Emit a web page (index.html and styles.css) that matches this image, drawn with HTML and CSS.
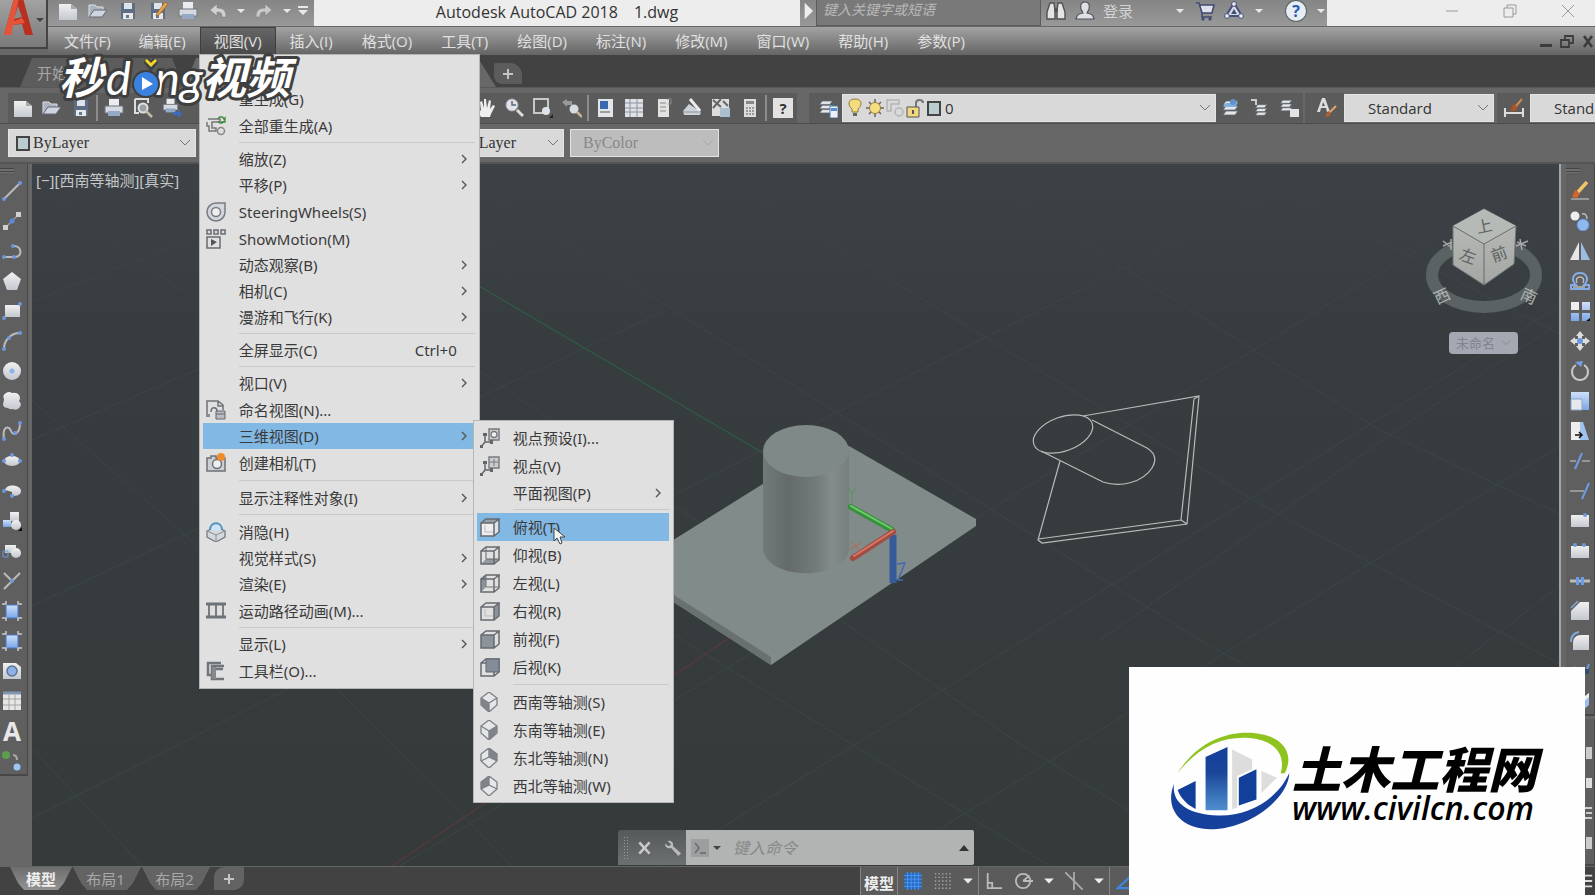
FILE: index.html
```html
<!DOCTYPE html>
<html lang="zh-CN">
<head>
    <meta charset="UTF-8">
    <meta name="viewport" content="width=device-width, initial-scale=1">
    <title>Autodesk AutoCAD 2018 1.dwg</title>
    <link rel="stylesheet" href="styles.css">
</head>
<body>
    <!-- shared icons -->
    <svg class="defs" aria-hidden="true">
        <defs>
            <linearGradient id="gl" x1="0" y1="0" x2="0" y2="1"><stop offset="0" stop-color="#f0f0f0"/><stop offset="1" stop-color="#c4c8d0"/></linearGradient>
            <linearGradient id="gb" x1="0" y1="0" x2="0" y2="1"><stop offset="0" stop-color="#cfe0fa"/><stop offset="1" stop-color="#7ba6e6"/></linearGradient>
        </defs>
        <symbol id="new" viewBox="0 0 20 20"><path d="M1 3h12l6 5v11H1z" fill="url(#gl)"/><path d="M13 3v5h6z" fill="#a8a8a8"/></symbol>
        <symbol id="open" viewBox="0 0 20 20"><path d="M1 16V4h6l2 2h6v3" fill="#a9b2bd" stroke="#dde2e8"/><path d="M1 16 6 9h13l-5 7z" fill="#cdd5de" stroke="#667"/></symbol>
        <symbol id="save" viewBox="0 0 20 20"><path d="M3 2h14v16H3z" fill="#5d6d84"/><path d="M6 2h8v6H6z" fill="#dce3ea"/><path d="M5 12h10v6H5z" fill="#e8e8e8"/><path d="M8 14h3v3H8z" fill="#68788c"/></symbol>
        <symbol id="print" viewBox="0 0 20 20"><path d="M5 1h10v7H5z" fill="#e9edf2"/><path d="M1 8h18v7H1z" fill="#d6dae0" stroke="#70757c"/><path d="M4 13h12v5H4z" fill="#93a9c6"/></symbol>
        <symbol id="down" viewBox="0 0 10 10"><path d="M1 3h8L5 7z" fill="currentColor"/></symbol>
        <symbol id="chev" viewBox="0 0 12 12"><path d="m1 3 5 5 5-5" fill="none" stroke="currentColor"/></symbol>
        <symbol id="right" viewBox="0 0 10 12"><path d="m3 2 4 4-4 4" fill="none" stroke="#555" stroke-width="1.4"/></symbol>
        <symbol id="layers" viewBox="0 0 20 20"><path d="M5 3h12l-3 4H2zM5 8h12l-3 4H2zM5 13h12l-3 4H2z" fill="#e5e8ea" stroke="#5d6570" stroke-width=".8"/></symbol>
        <symbol id="cube" viewBox="0 0 20 20"><path d="M1 6h13v13H1zM1 6l5-4h13l-5 4M19 2v13l-5 4" fill="none" stroke="#656a70" stroke-width="1.5"/></symbol>
        <symbol id="iso" viewBox="0 0 20 20"><path d="M9 1 1 10l8 9 8-9zM9 12v7M1 10l8 2 8-2" fill="none" stroke="#7b8086" stroke-width="1.4"/></symbol>
        <symbol id="region" viewBox="0 0 20 20"><path d="M4 4h12v13H4z" fill="url(#gb)" stroke="#4677cc"/><path d="M0 3h4V0M16 0v3h4M4 20v-3H0M20 17h-4v3" fill="none" stroke="#ccc" stroke-width="1.5"/></symbol>
    </svg>

    <header class="app-header">
        <button class="app-button" aria-label="应用程序菜单">
            <svg width="34" height="36" viewBox="0 0 30 36"><path d="M1 35 11-2h9l10 37h-8l-3-11-10 1-2 10z" fill="#b8301f"/><path d="m1 35 10-37h5L8 35zM9 22l10-4 3 5-13 2z" fill="#e5543a"/><path d="m15 6-4 13 8-2z" fill="#8b8b8b"/></svg>
            <svg class="dark" width="10" height="10"><use href="#down"/></svg>
        </button>
        <div class="title-row">
            <div class="quick">
                <button aria-label="新建"><svg><use href="#new"/></svg></button>
                <button aria-label="打开"><svg><use href="#open"/></svg></button>
                <button aria-label="保存"><svg><use href="#save"/></svg></button>
                <button aria-label="另存为"><svg viewBox="0 0 20 20"><use href="#save"/><path d="m9 12 8-11 3 2-8 10-4 2z" fill="#e8a24c" stroke="#8a5a20" stroke-width=".6"/></svg></button>
                <button aria-label="打印"><svg><use href="#print"/></svg></button>
                <button aria-label="放弃"><svg viewBox="0 0 20 20"><path d="m2 9 7-6v4c7 0 9 3 9 9h-4c0-4-1-5-5-5v4z" fill="#d2d2d2" stroke="#777" stroke-width=".5"/></svg></button>
                <button class="tiny" aria-label="放弃列表"><svg><use href="#down"/></svg></button>
                <button aria-label="重做"><svg viewBox="0 0 20 20"><path d="m18 9-7-6v4c-7 0-9 3-9 9h4c0-4 1-5 5-5v4z" fill="#c8c8c8" stroke="#777" stroke-width=".5"/></svg></button>
                <button class="tiny" aria-label="重做列表"><svg><use href="#down"/></svg></button>
                <button class="tiny" aria-label="自定义"><svg viewBox="0 0 10 14"><path d="M0 2h10v2H0zM0 6h10l-5 5z" fill="#e8e8e8"/></svg></button>
            </div>
            <h1 class="title"><span>Autodesk AutoCAD 2018</span><span>1.dwg</span></h1>
            <div class="search">
                <button aria-label="展开搜索"><svg width="8" height="12" viewBox="0 0 8 12"><path d="M2 1v10l5-5z" fill="#eee"/></svg></button>
                <input type="text" aria-label="搜索" placeholder="键入关键字或短语">
            </div>
            <div class="info">
                <button aria-label="查找"><svg viewBox="0 0 20 20"><path d="M4 2h4l1 8v8H1v-7zM12 2h4l3 9v7h-8v-8z" fill="#e4e4e4" stroke="#505050" stroke-width="1.4"/><path d="M8 7h4v4H8z" fill="#555"/></svg></button>
                <button class="login"><svg viewBox="0 0 20 20"><path d="M10 1c4 0 5 3 4 7l-2 4c5 1 6 2 7 6H1c1-4 2-5 7-6L6 8C5 4 6 1 10 1z" fill="#dfe0e4" stroke="#4e5362" stroke-width="1.2"/></svg>登录</button>
                <button class="tiny push" aria-label="登录选项"><svg><use href="#down"/></svg></button>
                <button aria-label="应用商店"><svg viewBox="0 0 20 20"><path d="M1 2h3l3 10h10l2-8H5" fill="#dfe2ea" stroke="#3f4a72" stroke-width="1.6"/><path d="M7 12v4h10" fill="none" stroke="#3f4a72" stroke-width="1.5"/><circle cx="8" cy="18" r="1.6" fill="#3f4a72"/><circle cx="15" cy="18" r="1.6" fill="#3f4a72"/></svg></button>
                <button aria-label="A360"><svg viewBox="0 0 20 20"><path d="m10 2 8 13H2z" fill="#d9dce6" stroke="#45507a" stroke-width="2"/><circle cx="10" cy="3" r="2.4" fill="#e6e8ef" stroke="#45507a"/><circle cx="3" cy="15" r="2.4" fill="#e6e8ef" stroke="#45507a"/><circle cx="17" cy="15" r="2.4" fill="#e6e8ef" stroke="#45507a"/><path d="m10 8 3 5H7z" fill="#45507a"/></svg></button>
                <button class="tiny" aria-label="A360 选项"><svg><use href="#down"/></svg></button>
                <button class="help" aria-label="帮助"><span>?</span></button>
                <button class="tiny" aria-label="帮助选项"><svg><use href="#down"/></svg></button>
            </div>
            <div class="win">
                <button aria-label="最小化"><svg viewBox="0 0 14 14"><path d="M1 7h12"/></svg></button>
                <button aria-label="还原"><svg viewBox="0 0 14 14"><path d="M1 4h9v9H1zM4 4V1h9v9h-3"/></svg></button>
                <button aria-label="关闭"><svg viewBox="0 0 14 14"><path d="m1 1 12 12M13 1 1 13"/></svg></button>
            </div>
        </div>
        <nav class="menubar">
            <button>文件(F)</button>
            <button>编辑(E)</button>
            <div class="menu-open">
                <button class="active" aria-expanded="true">视图(V)</button>
                <ul class="menu view-menu">
                    <li><button>重生成(G)</button></li>
                    <li><button class="tall"><svg class="mi" viewBox="0 0 20 20"><path d="M2 3h12v3H6v6h4v3H3v-5H1V6" fill="none" stroke="#777" stroke-width="1.5"/><path d="M12 3c1-3 5-3 6 0l1-1v4h-4M18 5c-1 3-5 3-6 0" fill="none" stroke="#3d8a3d" stroke-width="1.4"/><circle cx="15" cy="15" r="3.5" fill="none" stroke="#888" stroke-width="1.5"/></svg>全部重生成(A)</button></li>
                    <li class="sep"></li>
                    <li><button>缩放(Z)<svg class="arrow"><use href="#right"/></svg></button></li>
                    <li><button>平移(P)<svg class="arrow"><use href="#right"/></svg></button></li>
                    <li><button class="tall"><svg class="mi" viewBox="0 0 20 20"><path d="M10 1h9v9a9 9 0 1 1-9-9z" fill="#d3d6dc" stroke="#767b84" stroke-width="1.5"/><circle cx="10" cy="10" r="4.5" fill="#eee" stroke="#767b84" stroke-width="1.5"/></svg>SteeringWheels(S)</button></li>
                    <li><button class="tall"><svg class="mi" viewBox="0 0 20 20"><path d="M1 1h4v4H1zM8 1h4v4H8zM15 1h4v4h-4zM1 8h13v11H1z" fill="none" stroke="#676c72" stroke-width="1.5"/><path d="m5 10 6 3-6 4z" fill="#555"/></svg>ShowMotion(M)</button></li>
                    <li><button>动态观察(B)<svg class="arrow"><use href="#right"/></svg></button></li>
                    <li><button>相机(C)<svg class="arrow"><use href="#right"/></svg></button></li>
                    <li><button>漫游和飞行(K)<svg class="arrow"><use href="#right"/></svg></button></li>
                    <li class="sep"></li>
                    <li><button>全屏显示(C)<kbd>Ctrl+0</kbd></button></li>
                    <li class="sep"></li>
                    <li><button>视口(V)<svg class="arrow"><use href="#right"/></svg></button></li>
                    <li><button class="tall"><svg class="mi" viewBox="0 0 20 20"><path d="M1 17V1h11l5 4v5M12 1v5h5M3 17v-3M5 12c0-6 6-5 6-1" fill="none" stroke="#6d7278" stroke-width="1.5"/><path d="M10 11h9v8h-9z" fill="#b8bcc2" stroke="#62676e"/><path d="M10 14h9" stroke="#62676e"/></svg>命名视图(N)...</button></li>
                    <li class="parent">
                        <button class="hot" aria-expanded="true">三维视图(D)<svg class="arrow"><use href="#right"/></svg></button>
                        <ul class="menu sub-menu">
                            <li><button><svg class="mi" viewBox="0 0 20 20"><path d="M9 1h10v11H9z" fill="#ccc" stroke="#74797f" stroke-width="1.4"/><circle cx="14" cy="6.5" r="3" fill="#eee" stroke="#74797f" stroke-width="1.3"/><path d="M5 7v7h7M5 14l-4 5" fill="none" stroke="#62676e" stroke-width="1.5"/><path d="M0 17h3v3H0zM3 5h4v3H3zM10 12h3v4h-3z" fill="#666"/></svg>视点预设(I)...</button></li>
                            <li><button><svg class="mi" viewBox="0 0 20 20"><path d="M9 1h10v11H9z" fill="#ccc" stroke="#74797f" stroke-width="1.4"/><path d="M14 3v7M10 6h8" stroke="#74797f"/><path d="M5 7v7h7M5 14l-4 5" fill="none" stroke="#62676e" stroke-width="1.5"/><path d="M0 17h3v3H0zM3 5h4v3H3zM10 12h3v4h-3z" fill="#666"/></svg>视点(V)</button></li>
                            <li><button class="short">平面视图(P)<svg class="arrow"><use href="#right"/></svg></button></li>
                            <li class="sep"></li>
                            <li><button class="hot"><svg class="mi" viewBox="0 0 20 20"><path d="M1 6h13v13H1z" fill="#eee"/><path d="m1 6 5-4h13l-5 4z" fill="#9aa0a8"/><path d="M14 6l5-4v13l-5 4z" fill="#dde4ec"/><use href="#cube"/><path d="M5 8v7h8" fill="none" stroke="#bbb"/></svg>俯视(T)</button></li>
                            <li><button><svg class="mi" viewBox="0 0 20 20"><path d="m1 19 5-5h13l-5 5z" fill="#9399a1"/><use href="#cube"/><path d="M6 2v12h13" fill="none" stroke="#656a70"/></svg>仰视(B)</button></li>
                            <li><button><svg class="mi" viewBox="0 0 20 20"><path d="m1 6 5-4v12l-5 5z" fill="#8d939b"/><use href="#cube"/><path d="M6 2v12h13" fill="none" stroke="#777"/></svg>左视(L)</button></li>
                            <li><button><svg class="mi" viewBox="0 0 20 20"><path d="m14 6 5-4v13l-5 4z" fill="#8d939b"/><use href="#cube"/><path d="M5 8v7h8" fill="none" stroke="#bbb"/></svg>右视(R)</button></li>
                            <li><button><svg class="mi" viewBox="0 0 20 20"><path d="M1 6h13v13H1z" fill="#8d939b"/><use href="#cube"/></svg>前视(F)</button></li>
                            <li><button><svg class="mi" viewBox="0 0 20 20"><use href="#cube"/><path d="M6 2h13v13H6z" fill="#848c99" stroke="#5e6671"/></svg>后视(K)</button></li>
                            <li class="sep"></li>
                            <li><button><svg class="mi" viewBox="0 0 20 20"><path d="M9 0 1 6v7l8 7 8-7V6z" fill="#e4e6e8"/><path d="m1 6 8 5v9l-8-7z" fill="#7f848a"/><path d="M9 0 1 6v7l8 7 8-7V6zM1 6l8 5 8-5M9 11v9" fill="none" stroke="#7b8086" stroke-width="1.3"/></svg>西南等轴测(S)</button></li>
                            <li><button><svg class="mi" viewBox="0 0 20 20"><path d="M9 0 1 6v7l8 7 8-7V6z" fill="#e4e6e8"/><path d="m17 6-8 5v9l8-7z" fill="#7f848a"/><path d="M9 0 1 6v7l8 7 8-7V6zM1 6l8 5 8-5M9 11v9" fill="none" stroke="#7b8086" stroke-width="1.3"/></svg>东南等轴测(E)</button></li>
                            <li><button><svg class="mi" viewBox="0 0 20 20"><path d="M9 0 1 6v7l8 7 8-7V6z" fill="#e4e6e8"/><path d="m9 0 8 6v7L9 9z" fill="#7f848a"/><path d="M9 0 1 6v7l8 7 8-7V6zM9 0v9l-8 4M9 9l8 4" fill="none" stroke="#7b8086" stroke-width="1.3"/></svg>东北等轴测(N)</button></li>
                            <li><button><svg class="mi" viewBox="0 0 20 20"><path d="M9 0 1 6v7l8 7 8-7V6z" fill="#e4e6e8"/><path d="M9 0 1 6v7l8-4z" fill="#7f848a"/><path d="M9 0 1 6v7l8 7 8-7V6zM9 0v9l-8 4M9 9l8 4" fill="none" stroke="#7b8086" stroke-width="1.3"/></svg>西北等轴测(W)</button></li>
                        </ul>
                        <svg class="cursor" width="14" height="18" viewBox="0 0 14 18"><path d="M1 1v13l3-3 3 6 2-1-2-6h5z" fill="#f4f4f4" stroke="#444"/></svg>
                    </li>
                    <li><button class="tall"><svg class="mi" viewBox="0 0 20 20"><path d="M1 5h4V3h5v2h9v13H1z" fill="#ccd0d4" stroke="#6b7076" stroke-width="1.5"/><circle cx="11" cy="11" r="4.5" fill="#eee" stroke="#6b7076" stroke-width="1.5"/><circle cx="15" cy="4" r="4" fill="#ef8b2d"/></svg>创建相机(T)</button></li>
                    <li class="sep wide"></li>
                    <li><button>显示注释性对象(I)<svg class="arrow"><use href="#right"/></svg></button></li>
                    <li class="sep"></li>
                    <li><button class="tall"><svg class="mi" viewBox="0 0 20 20"><path d="m1 9 9-4 9 4v6l-9 5-9-5z" fill="#d5d8dc" stroke="#757b82" stroke-width="1.3"/><path d="M1 9l9 4 9-4M10 13v7" fill="none" stroke="#8a9097"/><path d="M4 8c0-9 12-9 12 0" fill="#cfe4f5" stroke="#4e8fbd" stroke-width="1.8"/></svg>消隐(H)</button></li>
                    <li><button>视觉样式(S)<svg class="arrow"><use href="#right"/></svg></button></li>
                    <li><button>渲染(E)<svg class="arrow"><use href="#right"/></svg></button></li>
                    <li><button class="tall"><svg class="mi" viewBox="0 0 20 20"><path d="M0 3h20M0 16h20" stroke="#6e7377" stroke-width="3"/><path d="M3 3v13M10 3v13M17 3v13" stroke="#6e7377" stroke-width="1.8"/></svg>运动路径动画(M)...</button></li>
                    <li class="sep"></li>
                    <li><button>显示(L)<svg class="arrow"><use href="#right"/></svg></button></li>
                    <li><button class="tall"><svg class="mi" viewBox="0 0 20 20"><path d="M15 2H2v12h3M18 5H6v13h12M9 8h8" fill="none" stroke="#70757a" stroke-width="2.5"/><path d="M6 6h4v12H6z" fill="#85898d"/></svg>工具栏(O)...</button></li>
                </ul>
            </div>
            <button>插入(I)</button>
            <button>格式(O)</button>
            <button>工具(T)</button>
            <button>绘图(D)</button>
            <button>标注(N)</button>
            <button>修改(M)</button>
            <button>窗口(W)</button>
            <button>帮助(H)</button>
            <button>参数(P)</button>
            <div class="doc-win">
                <button aria-label="最小化图形"><svg viewBox="0 0 14 14"><path d="M1 10h12v3H1z" fill="#3c3c3c"/></svg></button>
                <button aria-label="还原图形"><svg viewBox="0 0 14 14"><path d="M1 6h8v7H1zM5 5V2h8v7h-3" fill="none" stroke="#3c3c3c" stroke-width="1.8"/></svg></button>
                <button aria-label="关闭图形"><svg viewBox="0 0 14 14"><path d="m3 2 8 11M11 2 3 13" stroke="#3c3c3c" stroke-width="2.6"/></svg></button>
            </div>
        </nav>
    </header>

    <div class="doc-tabs">
        <button class="tab-start">开始</button>
        <button class="tab-doc" aria-label="1.dwg"></button>
        <button class="tab-plus" aria-label="新图形"><svg width="12" height="12" viewBox="0 0 12 12"><path d="M6 1v10M1 6h10" stroke="#c4c4c4" stroke-width="2"/></svg></button>
    </div>

    <div class="toolbar">
        <div class="group files">
            <svg><use href="#new"/></svg>
            <svg><use href="#open"/></svg>
            <svg><use href="#save"/></svg>
            <i></i>
            <svg><use href="#print"/></svg>
            <svg viewBox="0 0 20 20"><path d="M2 1h13v4M2 1v14h4" fill="none" stroke="#ddd" stroke-width="2"/><circle cx="10" cy="10" r="4.5" fill="#9aa0a6" stroke="#e2e2e2" stroke-width="2"/><path d="m13 13 6 6" stroke="#c4b8a8" stroke-width="2.5"/></svg>
            <svg viewBox="0 0 20 20"><use href="#print" width="17" height="16"/><path d="M11 14h5v-3l4 5-4 4v-3h-5z" fill="#3a6cc0"/></svg>
        </div>
        <div class="group zooms">
            <svg viewBox="0 0 20 20"><path d="M6 19 1 11l2-1 3 3-1-9 2-1 2 7V1h2l1 9 2-8 2 1-1 8 3-4 2 1-4 8-1 3z" fill="#eee"/></svg>
            <svg viewBox="0 0 20 20"><circle cx="8" cy="7" r="6" fill="#e0e4ea" stroke="#aaa"/><path d="M8 3v4h4" stroke="#567" fill="none" stroke-width="1.5"/><path d="m13 12 6 6" stroke="#ddd" stroke-width="3"/></svg>
            <svg viewBox="0 0 20 20"><path d="M1 1h14v14H1z" fill="none" stroke="#c8c8c8" stroke-width="2"/><circle cx="13" cy="13" r="4" fill="#dde3ea"/><path d="M20 16v4h-4z" fill="#222"/></svg>
            <svg viewBox="0 0 20 20"><path d="m0 4 5-3v2h5v4H5v2z" fill="#999"/><circle cx="12" cy="11" r="4.5" fill="#d5dce4"/><path d="m15 14 5 5" stroke="#c4b29a" stroke-width="2.5"/></svg>
            <i></i>
            <svg viewBox="0 0 20 20"><path d="M3 1h15v18H3z" fill="#e2e5e9"/><path d="M5 3h8v8H5z" fill="#3b69ad"/><path d="M5 14h10" stroke="#555"/></svg>
            <svg viewBox="0 0 20 20"><path d="M1 1h18v18H1z" fill="#dfe1e4"/><path d="M1 5h18M1 10h18M1 14h18M6 1v18M13 1v18" stroke="#8b93a3"/></svg>
            <svg viewBox="0 0 20 20"><path d="M5 1h11v18H5z" fill="#e2e2e0"/><path d="M14 1h4v5h-3M7 5h6M7 9h6M7 13h6" stroke="#8a8a8a" fill="none"/></svg>
            <svg viewBox="0 0 20 20"><path d="m1 13 6-7 12 8-1 3H2z" fill="#ccd3d8"/><path d="m8 1 10 12" stroke="#eee" stroke-width="3"/><path d="M1 14h18" stroke="#8593a0"/></svg>
            <svg viewBox="0 0 20 20"><path d="M1 1h17v17H1z" fill="#ddd"/><path d="m2 2 8 7M10 1l-8 9M12 3l5 5" stroke="#666" stroke-width="2"/><path d="M9 10h10v9H9z" fill="#a9bfd0"/></svg>
            <svg viewBox="0 0 20 20"><path d="M4 1h12v18H4z" fill="#ddd"/><path d="M6 3h8v3H6z" fill="#888"/><path d="M6 10h8M6 13h8M6 16h8" stroke="#999" stroke-dasharray="2 1" stroke-width="2"/></svg>
            <i></i>
            <span class="question">?</span>
        </div>
        <div class="group layer-icon">
            <svg viewBox="0 0 20 20"><use href="#layers" width="17" height="18"/><path d="M12 8h8v12h-8z" fill="#edf1f5" stroke="#4f7db8"/><path d="M13 10h6v3h-6z" fill="#5a8fd0"/></svg>
        </div>
        <div class="combo layer">
            <svg viewBox="0 0 20 20"><path d="M10 1c8 0 7 7 3 10v3H7v-3C3 8 2 1 10 1z" fill="#f3dc80" stroke="#927a30"/><path d="M8 15h4v3H8z" fill="#666"/></svg>
            <svg viewBox="0 0 20 20"><path d="M10 1v18M1 10h18M4 4l12 12M16 4 4 16" stroke="#666" stroke-width="1.5"/><circle cx="10" cy="10" r="5.5" fill="#f6de84" stroke="#a08030"/></svg>
            <svg viewBox="0 0 20 20"><path d="M2 2h12v4H6v7H2z" fill="none" stroke="#b4b4b4" stroke-width="1.5"/><circle cx="14" cy="14" r="4" fill="none" stroke="#b4b4b4" stroke-width="1.5"/></svg>
            <svg viewBox="0 0 20 20"><path d="M11 9V5c0-4 7-4 7 0" fill="none" stroke="#777" stroke-width="2"/><path d="M2 9h12v10H2z" fill="#f1d982" stroke="#555"/><path d="M8 12v4" stroke="#555" stroke-width="2"/></svg>
            <i class="swatch"></i>
            <select aria-label="图层"><option>0</option></select>
            <svg class="chev"><use href="#chev"/></svg>
        </div>
        <div class="group">
            <svg viewBox="0 0 20 20"><use href="#layers"/><path d="M5 5h12l-3 4H2z" fill="#7fb0e2"/><circle cx="12" cy="4" r="3" fill="#5d91cc"/></svg>
            <svg viewBox="0 0 20 20"><use href="#layers" x="4" y="4" width="15" height="16"/><path d="M1 2h5v5" fill="none" stroke="#ccc" stroke-width="2"/></svg>
            <svg viewBox="0 0 20 20"><use href="#layers" width="15" height="15"/><path d="M11 11h9v8h-9z" fill="#e2e4e8"/></svg>
        </div>
        <div class="group style">
            <svg viewBox="0 0 20 20"><path d="m0 14 5-14h3l5 14h-3l-1-4H4l-1 4zM5 8h3L6 4z" fill="#ddd"/><path d="m8 19 3-6 3 1-1 4z" fill="#b1602c"/><path d="m13 14 6-6" stroke="#dfa860" stroke-width="2"/></svg>
        </div>
        <label class="combo std"><select aria-label="文字样式"><option>Standard</option></select><svg class="chev"><use href="#chev"/></svg></label>
        <div class="group dim">
            <svg viewBox="0 0 20 20"><path d="M1 10v9M19 10v9M1 15h18" stroke="#ddd" stroke-width="2"/><path d="m6 13 3-7 5 2-2 5z" fill="#a7552c"/><path d="m12 8 6-7" stroke="#c98a50" stroke-width="2"/></svg>
        </div>
        <label class="combo std last"><select aria-label="标注样式"><option>Standard</option></select></label>
    </div>

    <div class="props">
        <label class="combo color"><i class="swatch"></i><select aria-label="颜色"><option>ByLayer</option></select><svg class="chev"><use href="#chev"/></svg></label>
        <label class="combo weight"><select aria-label="线宽"><option>ByLayer</option></select><svg class="chev"><use href="#chev"/></svg></label>
        <label class="combo plot"><select aria-label="打印样式" disabled><option>ByColor</option></select><svg class="chev"><use href="#chev"/></svg></label>
    </div>

    <main class="work">
        <aside class="side left">
            <div class="dock">
                <svg viewBox="0 0 20 20"><path d="M2 18 18 2" stroke="#bbb" stroke-width="2"/><circle cx="2" cy="18" r="2" fill="#6d99dc"/><circle cx="18" cy="2" r="2" fill="#6d99dc"/></svg>
                <svg viewBox="0 0 20 20"><path d="M3 17 17 3" stroke="#999" stroke-width="1.5"/><path d="M1 14h5v5H1zM14 1h5v5h-5z" fill="#d0d0d0"/><circle cx="10" cy="10" r="2.5" fill="#5a8ae0"/></svg>
                <svg viewBox="0 0 20 20"><path d="M1 16h12c8 0 7-12-2-11" fill="none" stroke="#bbb" stroke-width="2"/><circle cx="2" cy="16" r="2" fill="#6d99dc"/><circle cx="12" cy="16" r="2" fill="#6d99dc"/><circle cx="11" cy="5" r="2" fill="#6d99dc"/></svg>
                <svg viewBox="0 0 20 20"><path d="m10 1 9 7-4 11H5L1 8z" fill="url(#gl)"/></svg>
                <svg viewBox="0 0 20 20"><path d="M3 4h15v12H3z" fill="url(#gl)"/><circle cx="2" cy="17" r="2" fill="#6d99dc"/><circle cx="18" cy="3" r="2" fill="#6d99dc"/></svg>
                <svg viewBox="0 0 20 20"><path d="M2 18C2 10 8 2 18 2" fill="none" stroke="#bbb" stroke-width="2"/><circle cx="2" cy="18" r="2" fill="#6d99dc"/><circle cx="7" cy="7" r="2" fill="#6d99dc"/><circle cx="18" cy="2" r="2" fill="#6d99dc"/></svg>
                <svg viewBox="0 0 20 20"><circle cx="10" cy="10" r="9" fill="url(#gl)"/><circle cx="10" cy="10" r="2.5" fill="#8cb4ec"/></svg>
                <svg viewBox="0 0 20 20"><path d="M4 2q3-2 6 0 5-1 7 2 2 3 0 6 3 3 1 6-3 4-7 2-3 1-5-1-5 0-5-4 1-3 1-5-2-4 2-6z" fill="url(#gl)"/></svg>
                <svg viewBox="0 0 20 20"><path d="M2 18C0 5 7 4 9 10s9 3 9-8" fill="none" stroke="#bbb" stroke-width="2"/><circle cx="2" cy="18" r="2" fill="#6d99dc"/><circle cx="13" cy="12" r="2" fill="#6d99dc"/><circle cx="18" cy="2" r="2" fill="#6d99dc"/></svg>
                <svg viewBox="0 0 20 20"><ellipse cx="10" cy="10" rx="8" ry="5" fill="url(#gl)"/><circle cx="2" cy="10" r="2" fill="#6d99dc"/><circle cx="18" cy="10" r="2" fill="#6d99dc"/><circle cx="10" cy="4" r="2" fill="#6d99dc"/></svg>
                <svg viewBox="0 0 20 20"><path d="M3 9c2-7 16-5 16 1 0 4-4 5-9 5v-4z" fill="url(#gl)"/><circle cx="2" cy="10" r="2" fill="#6d99dc"/><circle cx="10" cy="15" r="2" fill="#6d99dc"/></svg>
                <svg viewBox="0 0 20 20"><path d="M8 1h9v9H8z" fill="url(#gl)"/><path d="M1 9h8v7H1z" fill="url(#gb)"/><circle cx="14" cy="14" r="5" fill="url(#gl)"/><path d="M20 16v4h-4z" fill="#111"/></svg>
                <svg viewBox="0 0 20 20"><path d="M3 4h11v8H3z" fill="url(#gl)"/><circle cx="14" cy="12" r="5" fill="url(#gl)"/><path d="M1 10h5v6H1z" fill="none" stroke="#6d99dc"/></svg>
                <svg viewBox="0 0 20 20"><path d="M2 18 18 2M2 2l8 8" stroke="#bbb" stroke-width="2"/><circle cx="10" cy="10" r="2" fill="#6d99dc"/></svg>
                <svg><use href="#region"/></svg>
                <svg><use href="#region"/></svg>
                <svg viewBox="0 0 20 20"><path d="M1 2h13l5 4v12H1z" fill="url(#gl)"/><circle cx="10" cy="10" r="5" fill="#8eb2e8" stroke="#5e7490" stroke-width="1.5"/></svg>
                <svg viewBox="0 0 20 20"><path d="M1 1h18v18H1z" fill="#e6e6e4"/><path d="M1 2h18" stroke="#8296b4" stroke-width="3"/><path d="M1 8h18M1 14h18M7 4v15M13 4v15" stroke="#a4a4a4"/></svg>
                <b>A</b>
                <svg viewBox="0 0 20 20"><circle cx="4" cy="4" r="4" fill="#5b9e4b"/><path d="M11 4q4 0 4 5" fill="none" stroke="#aaa" stroke-width="2"/><circle cx="15" cy="16" r="3.5" fill="#9cc6f4"/></svg>
            </div>
        </aside>

        <section class="viewport">
            <!-- scene coordinates follow the window -->
            <svg class="scene" viewBox="32 164 1527 702" preserveAspectRatio="xMinYMin slice">
                <defs>
                    <linearGradient id="cyl"><stop offset="0" stop-color="#727a79"/><stop offset=".3" stop-color="#646b6a"/><stop offset=".65" stop-color="#757c7c"/><stop offset=".8" stop-color="#858c8c"/><stop offset="1" stop-color="#767e7e"/></linearGradient>
                    <linearGradient id="cubeL" x1="0" x2="0" y1="0" y2="1"><stop offset="0" stop-color="#babdba"/><stop offset="1" stop-color="#a3a6a3"/></linearGradient>
                </defs>
                <path class="grid" d="M32 302 340 180M32 440l460-196M32 606l630-294M32 818 1330 164M400 866l860-520 299-182M660 866l900-560M880 866l680-420M1100 640l300-212 159-105M1400 710l160-125M40 190l170 120 440 310 400 246M32 400l150 132 330 334M30 746l112 120M180 164l840 580 200 122M440 164l760 476 300 170M700 164l560 340 300 160M960 164l420 266 180 84M1230 164l330 170"/>
                <path d="M479 286 763 453" stroke="#2b6646"/>
                <path d="M735 634 392 866" stroke="#6a353a"/>
                <path d="m630 567 176-110 43-11 127 73v7L771 665 630 574z" fill="#808b8a"/>
                <path d="m630 567 141 90v8l-141-91z" fill="#687070"/>
                <path d="M763 451v96c0 35 86 35 86 0v-96z" fill="url(#cyl)"/>
                <ellipse cx="806" cy="451" rx="43" ry="26" fill="#7f8988"/>
                <g stroke-linecap="round">
                    <path d="m851 507 41 23" stroke="#38903d" stroke-width="6"/><path d="m851 506 41 23" stroke="#69cc69" stroke-width="2"/>
                    <path d="M893 535v48" stroke="#355b9b" stroke-width="7" stroke-linecap="butt"/>
                    <path d="m893 532-40 26" stroke="#a34c43" stroke-width="6"/><path d="m893 531-39 25" stroke="#d77768" stroke-width="2"/>
                </g>
                <path d="m848 487 4 7 4-7m-4 7v9" fill="none" stroke="#4c9c51"/>
                <path d="m851 541 9 10m1-8-11 6" fill="none" stroke="#b56758"/>
                <path d="m897 564 8-1-7 17h5" fill="none" stroke="#4269b8" stroke-width="1.5"/>
                <g fill="none" stroke="#b8bbbb" stroke-width="1.2">
                    <ellipse cx="1063" cy="434" rx="31" ry="17" transform="rotate(-20 1063 434)"/>
                    <path d="m1092 420 55 28c8 5 10 12 5 20-9 14-31 20-49 14l-62-31M1083 416l116-20-12 128-145 19-4-3 22-79M1199 396l-5 3-13 121-143 19M1181 520l6 4"/>
                </g>
                <g class="compass">
                    <ellipse cx="1484" cy="275" rx="52" ry="32" fill="none" stroke="#5b6264" stroke-width="12"/>
                    <path d="m1484 209 32 17-2 38-30 21-31-20v-39z" fill="url(#cubeL)" stroke="#6f7474"/>
                    <path d="m1484 209 32 17-32 18-31-18z" fill="#b6bab7"/>
                    <path d="m1453 226 31 18 32-18M1484 244v41" fill="none" stroke="#666b6b"/>
                    <text x="1476" y="232" transform="rotate(-12 1484 226)">上</text>
                    <text x="1460" y="262" transform="rotate(20 1468 256)">左</text>
                    <text x="1491" y="260" transform="rotate(-20 1499 254)">前</text>
                    <g class="dirs"><text x="1434" y="302" transform="rotate(-25 1442 296)">西</text><text x="1521" y="302" transform="rotate(25 1529 296)">南</text></g>
                    <path d="m1443 241 9 7m-1-9v11m-8-4 9-4M1517 242l9 4m-6-7 2 11m-6-4 12-5" stroke="#a3a7a7" stroke-width="1.5"/>
                </g>
            </svg>
            <p class="view-label">[−][西南等轴测][真实]</p>
            <button class="ucs">未命名 <svg><use href="#chev"/></svg></button>
            <div class="command">
                <div class="command-tools">
                    <i class="dots"></i>
                    <button aria-label="关闭命令行"><svg viewBox="0 0 14 14"><path d="m2 2 9 10M11 2 2 12" stroke="#c8caca" stroke-width="2.2"/></svg></button>
                    <button aria-label="自定义"><svg viewBox="0 0 18 18"><path d="M3 1 7 5 4 7 0 4c0 5 4 6 7 5l8 9 3-3-9-8c1-4-2-7-6-6z" fill="#b9bcbc"/></svg></button>
                </div>
                <div class="command-line">
                    <svg width="18" height="18" viewBox="0 0 18 18"><path d="M0 0h18v18H0z" fill="#9b9f9f"/><path d="m4 4 4 5-4 5M9 14h6" fill="none" stroke="#666b6b" stroke-width="1.5"/></svg>
                    <svg class="dark" width="10" height="10"><use href="#down"/></svg>
                    <input type="text" aria-label="命令" placeholder="键入命令">
                    <svg width="10" height="10" viewBox="0 0 10 10"><path d="M0 8h10L5 2z" fill="#333"/></svg>
                </div>
            </div>
        </section>

        <aside class="side right">
            <div class="dock">
                <svg viewBox="0 0 20 20"><path d="M1 18h18" stroke="#aaa" stroke-width="1.5"/><path d="m2 16 3-7 5 4-3 4z" fill="#d3642b"/><path d="m8 11 9-10" stroke="#f1c46c" stroke-width="3.5"/></svg>
                <svg viewBox="0 0 20 20"><circle cx="5" cy="5" r="4.5" fill="#eee"/><circle cx="13" cy="14" r="6" fill="#8fb8ee" stroke="#5e8cd0"/><path d="M12 3q5-1 5 5" fill="none" stroke="#bbb" stroke-width="1.5"/></svg>
                <svg viewBox="0 0 20 20"><path d="M9 1v18H0z" fill="#e6e6e6"/><path d="M11 1v18h9z" fill="#9dbce4"/></svg>
                <svg viewBox="0 0 20 20"><path d="M1 18h18v-4h-5c6-6 2-12-4-12S0 8 6 14H1z" fill="none" stroke="#84ade8" stroke-width="2"/><path d="M3 16h12M7 12c-4-8 10-8 6 0" fill="none" stroke="#bbb" stroke-width="1.5"/></svg>
                <svg viewBox="0 0 20 20"><path d="M1 1h8v8H1z" fill="#eee"/><path d="M12 1h8v8h-8zM1 12h8v8H1zM12 12h8v8h-8z" fill="url(#gb)"/><path d="M20 17v3h-4z" fill="#111"/></svg>
                <svg viewBox="0 0 20 20"><path d="m10 0 4 5H6zM10 20l-4-5h8zM0 10l5-4v8zM20 10l-5 4V6zM8 5h4v10H8z" fill="#ddd"/><path d="M5 8h10v4H5z" fill="#ddd"/><circle cx="10" cy="10" r="3" fill="#6b9ae2"/></svg>
                <svg viewBox="0 0 20 20"><path d="M6 4a8 8 0 1 0 8 0" fill="none" stroke="#c8c8c8" stroke-width="2"/><path d="m5 1 8-1-2 6z" fill="#72a2e8"/></svg>
                <svg viewBox="0 0 20 20"><path d="M1 1h18v18H1z" fill="url(#gb)"/><path d="M1 8h11v11H1z" fill="#e6e8ec" stroke="#8aa4ca"/></svg>
                <svg viewBox="0 0 20 20"><path d="M1 1h11v18H1z" fill="#eee"/><path d="M10 1h3l6 18h-9z" fill="#9fc2ef"/><path d="M5 14h7m-3-3 3 3-3 3" fill="none" stroke="#111" stroke-width="1.5"/></svg>
                <svg viewBox="0 0 20 20"><path d="M0 10h6M12 10h8" stroke="#aaa" stroke-width="1.5"/><path d="m5 18 7-16" stroke="#6e9ce4" stroke-width="2"/></svg>
                <svg viewBox="0 0 20 20"><path d="M0 10h14" stroke="#aaa" stroke-width="1.5"/><path d="m12 18 7-16" stroke="#6e9ce4" stroke-width="2"/></svg>
                <svg viewBox="0 0 20 20"><path d="M1 4h18v12H1z" fill="url(#gl)"/><circle cx="15" cy="4" r="2" fill="#6d99dc"/></svg>
                <svg viewBox="0 0 20 20"><path d="M1 5h18v12H1z" fill="url(#gl)"/><circle cx="5" cy="4" r="2" fill="#6d99dc"/><circle cx="14" cy="4" r="2" fill="#6d99dc"/></svg>
                <svg viewBox="0 0 20 20"><path d="M0 10h20" stroke="#bbb" stroke-width="3"/><path d="M6 6h3v8H6zM11 6h3v8h-3z" fill="#6b9ee8"/></svg>
                <svg viewBox="0 0 20 20"><path d="M1 10 10 1h9v18H1z" fill="url(#gl)"/><path d="m1 7 7-7" stroke="#81a8df" stroke-width="1.5"/></svg>
                <svg viewBox="0 0 20 20"><path d="M3 19v-7c0-5 3-8 8-8h8v15z" fill="url(#gl)"/><path d="M1 11C1 5 4 2 9 1" fill="none" stroke="#81a8df" stroke-width="2"/></svg>
                <svg viewBox="0 0 20 20"><path d="M1 12c3-8 7-6 9-1s5 3 9-8" fill="none" stroke="#6b9ee8" stroke-width="2"/><path d="M14 8h5v5h-5z" fill="#394a6a"/></svg>
                <svg viewBox="0 0 20 20"><path d="m9 10 10-8v12l-6 5z" fill="#9bc0f0"/><path d="m9 10 10-8v4l-8 7z" fill="#eee"/></svg>
            </div>
            <div class="dock order">
                <svg viewBox="0 0 20 20"><path d="M12 4h6v12h-6z" fill="#ccc"/></svg>
                <svg viewBox="0 0 20 20"><path d="M12 5h6v10h-6z" fill="#ddd"/></svg>
                <svg viewBox="0 0 20 20"><path d="M10 5h8M12 10h6M10 15h8" stroke="#ccc" stroke-width="2"/></svg>
                <svg viewBox="0 0 20 20"><path d="M12 4h6v12h-6z" fill="#ccc"/></svg>
            </div>
        </aside>
    </main>

    <footer class="status">
        <div class="layouts">
            <button class="current">模型</button>
            <button>布局1</button>
            <button>布局2</button>
            <button class="add" aria-label="新建布局"><svg width="12" height="12" viewBox="0 0 12 12"><path d="M6 1v10M1 6h10" stroke="#c4c4c4" stroke-width="2"/></svg></button>
        </div>
        <div class="modes">
            <button class="model">模型</button>
            <button aria-label="栅格" class="on"><svg viewBox="0 0 20 20"><path d="M1 1h18v18H1z" fill="#2869c4"/><path d="M4 0v20M8 0v20M12 0v20M16 0v20M0 4h20M0 8h20M0 12h20M0 16h20" stroke="#4c98f4"/></svg></button>
            <button aria-label="捕捉"><svg viewBox="0 0 20 20"><path d="M1 2h18M1 6h18M1 10h18M1 14h18M1 18h18" stroke="#aaa" stroke-width="1.5" stroke-dasharray="1.5 2.5"/></svg></button>
            <button class="tiny" aria-label="捕捉选项"><svg><use href="#down"/></svg></button>
            <i></i>
            <button aria-label="正交"><svg viewBox="0 0 20 20"><path d="M3 1v17h16M3 12h5v6" fill="none" stroke="#bbb" stroke-width="2"/></svg></button>
            <button aria-label="极轴追踪"><svg viewBox="0 0 20 20"><circle cx="9" cy="10" r="8" fill="none" stroke="#bbb" stroke-width="2"/><path d="M9 10h11M9 10l7-6" fill="none" stroke="#bbb" stroke-width="2"/></svg></button>
            <button class="tiny" aria-label="极轴选项"><svg><use href="#down"/></svg></button>
            <button aria-label="等轴测草图"><svg viewBox="0 0 20 20"><path d="m0 0 20 20M10 0v20" fill="none" stroke="#aaa" stroke-width="2"/></svg></button>
            <button class="tiny" aria-label="等轴测选项"><svg><use href="#down"/></svg></button>
            <i></i>
            <button aria-label="对象捕捉追踪"><svg viewBox="0 0 20 20"><path d="M18 3 2 18h18" fill="none" stroke="#3c86e0" stroke-width="2.5"/></svg></button>
        </div>
        <button class="customize" aria-label="自定义状态栏"><svg viewBox="0 0 20 20"><path d="M2 4h16M2 10h16M2 16h16" stroke="#ddd" stroke-width="2"/></svg></button>
    </footer>

    <!-- video watermark -->
    <svg class="watermark" width="244" height="58" viewBox="0 0 244 58">
        <g class="wm">
            <text x="2" y="38" font-size="44">秒</text>
            <text x="49" y="39" font-size="47" class="lat">d</text>
            <text x="98" y="39" font-size="47" class="lat">ng</text>
            <text x="145" y="38" font-size="44">视频</text>
        </g>
        <circle cx="89" cy="28" r="14" fill="#3f3f3f"/>
        <circle cx="89" cy="28" r="12" fill="#3b82e0"/>
        <path d="M85 21v13l11-6z" fill="#fff"/>
        <path d="m89 4 5 6 5-6" fill="none" stroke="#3f3f3f" stroke-width="7"/>
        <path d="m89 4 5 5 5-5" fill="none" stroke="#f2d62e" stroke-width="3"/>
    </svg>

    <!-- site badge -->
    <a class="badge" href="#">
        <svg width="123" height="100" viewBox="150 930 370 300">
            <defs><linearGradient id="tower" x1="0" x2="0" y1="0" y2="1"><stop offset="0" stop-color="#123f9a"/><stop offset=".4" stop-color="#1a4699"/><stop offset="1" stop-color="#4f8fce"/></linearGradient></defs>
            <path d="M175 1057c60-95 150-130 235-121 80 8 120 60 88 121h-12c17-60-22-100-92-106-80-7-155 25-219 106z" fill="#8fc320"/>
            <path d="m340 985 60 30v30l-45 20v95l-15 5zM428 1050l47 20-47 46z" fill="#ddd"/>
            <path d="m176 1107 54-27v84c-25-12-45-32-54-57z" fill="#123f9a"/>
            <path d="m260 1008 66-30v190h-66z" fill="url(#tower)"/>
            <path d="m360 1070 53-25v91l-53 18z" fill="#123f9a"/>
            <path d="M165 1088c-30 75 20 137 110 137 120 0 235-95 237-169-38 82-125 131-215 128-90-3-140-38-132-96z" fill="#15409c"/>
        </svg>
        <span class="badge-text"><strong>土木工程网</strong><em>www.civilcn.com</em></span>
    </a>
</body>
</html>
```
FILE: styles.css
```css
* {
    box-sizing: border-box;
    margin: 0;
    padding: 0;
}
:root {
    --ui: "Open Sans", "Noto Sans CJK SC", sans-serif;
    --bar: #676767;
    --dock: #5b5b5b;
    --dark: #424242;
    --field: #d9d9d9;
    --menu: #e0e0e0;
    --hot: #82b8e4;
}
body {
    display: flex;
    flex-direction: column;
    height: 100vh;
    overflow: hidden;
    background: var(--bar);
    font: 15px/20px var(--ui);
    color: #333;
}
button, input, select {
    font: inherit;
    color: inherit;
    border: 0;
    background: none;
    appearance: none;
    outline: 0;
}
button {
    display: flex;
    align-items: center;
    justify-content: center;
}
svg {
    flex: none;
}
.defs {
    position: absolute;
    width: 0;
    height: 0;
}
.dark {
    color: #444;
}

/* title row and menu bar */
.app-header {
    display: grid;
    grid-template-columns: 48px 1fr;
    grid-template-rows: 27px 28px;
}
.app-button {
    grid-row: span 2;
    height: 49px;
    background: linear-gradient(#a2a2a2, #7a7a7a);
    border-right: 2px solid #444;
    border-bottom: 2px solid #444;
    align-items: flex-start;
}
.app-button .dark {
    margin-top: 15px;
}
.title-row {
    display: flex;
    background: #ededed;
    border-bottom: 1px solid #666;
}
.title-row > div {
    display: flex;
    align-items: center;
    padding-bottom: 5px;
    background: linear-gradient(#858585, #999);
}
.title-row button svg {
    width: 20px;
    height: 20px;
}
.title-row button.tiny {
    width: 16px;
    color: #e8e8e8;
}
.title-row button.tiny svg {
    width: 10px;
    height: 10px;
}
.quick {
    width: 266px;
    gap: 10px;
    padding-left: 10px;
}
.quick .tiny {
    margin: 0 -5px;
}
.title-row .quick .tiny:last-child svg {
    height: 14px;
}
.title {
    flex: 1;
    display: flex;
    justify-content: center;
    gap: 16px;
    font-size: 16px;
    font-weight: 400;
    line-height: 24px;
    color: #333;
}
.search button {
    width: 16px;
}
.search input {
    width: 225px;
    height: 26px;
    margin-bottom: -5px;
    padding: 0 6px 6px;
    background: #797979;
    border: solid #5c5c5c;
    border-width: 0 1px 1px;
    font-size: 14px;
    font-style: italic;
}
.search input::placeholder {
    color: #b8b8b8;
}
.info {
    width: 286px;
    gap: 9px;
    padding-left: 5px;
}
.info .login {
    gap: 8px;
    color: #d4d4d4;
}
.info .push {
    margin-left: auto;
}
.info .tiny {
    margin: 0 -2px;
}
.info .push.tiny {
    margin-left: auto;
}
.info .help {
    width: 20px;
    height: 20px;
    margin-left: 12px;
    border-radius: 50%;
    background: #e8edf3;
    box-shadow: 0 0 0 1px #566;
    font-weight: 700;
    font-size: 16px;
    color: #285bb5;
}
.title-row .win {
    width: 268px;
    justify-content: flex-end;
    gap: 44px;
    padding-right: 20px;
    padding-bottom: 4px;
    background: none;
}
.title-row .win svg {
    width: 14px;
    height: 14px;
    fill: none;
    stroke: #999;
}
.menubar {
    display: flex;
    background: linear-gradient(#a3a3a3, #646464);
    color: #e0e0e0;
}
.menubar > button, .menu-open > button {
    height: 28px;
    padding: 0 14px;
}
.menubar > button:first-child {
    margin-left: 2px;
}
.menubar > .menu-open ~ button {
    padding-right: 15px;
}
.menu-open {
    position: relative;
}
.menu-open > .active {
    background: linear-gradient(#666, #4a4a4a);
    border: 1px solid #3f3f3f;
    padding: 0 13px;
}
.doc-win {
    display: flex;
    gap: 7px;
    margin-left: auto;
}
.doc-win svg {
    width: 14px;
    height: 14px;
}

/* drop-down menus */
.menu {
    position: absolute;
    z-index: 5;
    list-style: none;
    background: var(--menu);
    color: #3a3a3a;
    box-shadow: 0 0 0 1px #b5b5b5;
    font-family: "Noto Sans", "Noto Sans CJK SC", sans-serif;
}
.view-menu {
    top: 28px;
    left: 0;
    width: 279px;
    padding: 31px 4px 4px 3px;
}
.sub-menu {
    top: -2px;
    left: 271px;
    width: 199px;
    padding: 3px 4px 2px 3px;
}
.menu button {
    position: relative;
    width: 100%;
    height: 26px;
    padding: 0 6px 0 36px;
    justify-content: flex-start;
    white-space: nowrap;
}
.menu .tall {
    height: 27px;
}
.sub-menu button {
    height: 28px;
}
.sub-menu .short {
    height: 26px;
}
.menu .hot {
    background: var(--hot);
}
.menu .mi {
    width: 20px;
    height: 20px;
    margin: 0 13px 0 -33px;
}
.menu .arrow {
    width: 10px;
    height: 12px;
    margin-left: auto;
}
.menu kbd {
    margin-left: auto;
    padding-right: 12px;
    font: inherit;
}
.sep {
    display: flex;
    align-items: center;
    height: 7px;
    margin-left: 36px;
}
.sep::before {
    content: "";
    flex: 1;
    height: 1px;
    background: #c9c9c9;
}
.sep.wide {
    height: 9px;
}
.parent {
    position: relative;
}
.cursor {
    position: absolute;
    z-index: 6;
    left: 350px;
    top: 104px;
}

/* drawing tabs */
.doc-tabs {
    display: flex;
    align-items: flex-end;
    height: 33px;
    padding-left: 20px;
    background: var(--dark);
    border-bottom: 1px solid #585858;
}
.doc-tabs button {
    background: #5c5c5c;
    color: #a8a8a8;
}
.doc-tabs .tab-start {
    width: 164px;
    height: 29px;
    padding-left: 17px;
    justify-content: flex-start;
    clip-path: polygon(12px 0, 152px 0, 100% 100%, 0 100%);
}
.doc-tabs .tab-doc {
    width: 312px;
    height: 29px;
    background: #686868;
    clip-path: polygon(12px 0, 294px 0, 100% 100%, 0 100%);
}
.doc-tabs .tab-plus {
    width: 28px;
    height: 21px;
    margin: 0 0 3px -2px;
    border-radius: 2px 12px 0 8px;
}

/* toolbars */
.toolbar {
    display: flex;
    align-items: center;
    height: 36px;
    padding: 5px 0 0 8px;
    border-bottom: 1px solid #4c4c4c;
}
.group {
    display: flex;
    align-items: center;
    align-self: stretch;
    background: var(--dock);
}
.group > svg, .question {
    width: 20px;
    height: 20px;
    margin: 0 4px 0 5px;
}
.group > i {
    width: 2px;
    height: 26px;
    margin: 0 1px;
    background: #8c8c8c;
}
.files {
    width: 462px;
}
.question {
    background: #e2e2e2;
    text-align: center;
    font-weight: 700;
}
.layer-icon {
    margin-left: 12px;
    padding-left: 4px;
}
.style {
    margin-left: 2px;
    padding: 0 3px 0 7px;
}
.dim {
    margin-left: 3px;
    padding: 0 2px;
}
.combo {
    display: flex;
    align-items: center;
    height: 28px;
    background: var(--field);
    border: 1px solid #e4e4e4;
}
.combo select {
    flex: 1;
    min-width: 0;
    color: #333;
}
.combo .chev {
    width: 12px;
    height: 12px;
    margin-right: 4px;
    color: #777;
}
.layer {
    flex: 1;
    padding-left: 2px;
}
.layer > svg:not(.chev) {
    width: 20px;
    height: 20px;
}
.swatch {
    width: 14px;
    height: 15px;
    background: #bccdd0;
    border: 2px solid #444;
}
.layer .swatch {
    margin-left: 2px;
}
.layer select {
    padding-left: 4px;
}
.std {
    width: 150px;
    padding-left: 23px;
}
.last {
    width: 65px;
    border-right: 0;
    overflow: hidden;
}
.last select {
    flex: none;
    width: 80px;
}
.props {
    display: flex;
    height: 40px;
    padding: 5px 0 0 8px;
    border-bottom: 2px solid #555;
    font: 16px/20px "Liberation Serif", serif;
}
.color {
    width: 188px;
    padding-left: 7px;
}
.color select {
    padding-left: 3px;
}
.weight {
    width: 188px;
    margin-left: 180px;
    padding-left: 83px;
}
.plot {
    width: 149px;
    margin-left: 6px;
    padding-left: 12px;
    background: #bdbdbd;
}
.combo select:disabled {
    color: #888;
    opacity: 1;
}
.plot .chev {
    color: #aaa;
}

/* work area */
.work {
    flex: 1;
    display: flex;
    min-height: 0;
}
.side {
    display: flex;
    flex-direction: column;
    overflow: hidden;
}
.left {
    width: 32px;
}
.right {
    width: 36px;
    padding-left: 5px;
    border-left: 2px solid #a3a3aa;
}
.dock {
    display: flex;
    flex-direction: column;
    align-items: center;
    gap: 10px;
    padding: 17px 0 3px;
    background: repeating-linear-gradient(#444 0 1px, #707070 1px 3px) 0 4px / 14px 5px no-repeat #5f5f5f;
    border: solid #474747;
    border-width: 0 1px 2px 0;
}
.left .dock {
    width: 28px;
    padding-right: 3px;
}
.dock > svg, .dock > b {
    width: 20px;
    height: 20px;
}
.dock > b {
    font-size: 26px;
    text-align: center;
    color: #e8e8e8;
}
.order {
    flex: 1;
    margin-top: 3px;
    padding-top: 24px;
    align-items: flex-end;
}
.viewport {
    position: relative;
    flex: 1;
    min-width: 0;
    background: linear-gradient(#3d4247, #373c3f 25%, #353b3b);
}
.scene {
    display: block;
    width: 100%;
    height: 100%;
}
.grid {
    fill: none;
    stroke: #3e4547;
}
.compass text {
    font: 16px "Noto Sans CJK SC", sans-serif;
    fill: #5e6363;
}
.compass .dirs text {
    fill: #aeb2b2;
}
.view-label {
    position: absolute;
    left: 4px;
    top: 6px;
    font-family: "Noto Sans", "Noto Sans CJK SC", sans-serif;
    color: #c6c8c8;
}
.ucs {
    position: absolute;
    right: 41px;
    top: 168px;
    width: 69px;
    height: 22px;
    gap: 6px;
    border-radius: 4px;
    background: #a5a8b2;
    color: #80858f;
    font-size: 13px;
}
.ucs svg {
    width: 10px;
    height: 10px;
}
.command {
    position: absolute;
    left: 586px;
    bottom: 1px;
    display: flex;
    width: 356px;
    height: 35px;
}
.command-tools {
    display: flex;
    align-items: center;
    gap: 8px;
    width: 68px;
    padding-left: 5px;
    background: linear-gradient(#555959, #6d7070);
    border-radius: 3px 0 0 0;
}
.command-tools button + button {
    margin-left: 4px;
}
.command-tools svg {
    width: 16px;
    height: 16px;
}
.dots {
    width: 6px;
    height: 24px;
    background: radial-gradient(#999 1px, transparent 1px) 0 0 / 3px 3px;
}
.command-line {
    flex: 1;
    display: flex;
    align-items: center;
    gap: 3px;
    padding: 0 5px;
    background: #b2b4b4;
    border-radius: 0 2px 2px 0;
}
.command-line input {
    flex: 1;
    min-width: 0;
    padding-left: 8px;
    font-size: 16px;
    font-style: italic;
}
.command-line input::placeholder {
    color: #868989;
}

/* status bar */
.status {
    display: flex;
    height: 29px;
    background: var(--dark);
    border-top: 1px solid #666;
}
.layouts {
    display: flex;
    width: 860px;
    padding-left: 10px;
    gap: 1px;
}
.layouts button {
    width: 68px;
    height: 23px;
    padding-right: 3px;
    background: #636363;
    color: #a9a9a9;
    clip-path: polygon(0 0, 100% 0, 60px 70%, 54px 100%, 14px 100%, 8px 70%);
}
.layouts .current {
    width: 62px;
    padding: 0;
    background: linear-gradient(#6d6d6d, #929292);
    color: #eee;
    font-weight: 700;
    clip-path: polygon(0 0, 100% 0, 54px 70%, 48px 100%, 14px 100%, 8px 70%);
}
.layouts .add {
    width: 30px;
    margin-left: 3px;
    padding: 0;
    clip-path: none;
    border-radius: 10px 0 10px 0;
}
.modes {
    display: flex;
    flex: 1;
    align-items: center;
    background: #5b5b5b;
    border-left: 1px solid #858585;
    color: #eee;
}
.modes button {
    width: 30px;
    height: 28px;
}
.modes svg {
    width: 18px;
    height: 18px;
}
.modes .model {
    width: 37px;
    padding-top: 4px;
    font-weight: 700;
    border-right: 1px solid #858585;
}
.modes .tiny {
    width: 20px;
}
.modes .tiny svg {
    width: 12px;
    height: 12px;
}
.modes i {
    width: 1px;
    height: 28px;
    background: #858585;
}
.customize {
    width: 20px;
}
.customize svg {
    width: 18px;
    height: 18px;
}

/* overlays */
.watermark {
    position: absolute;
    z-index: 10;
    left: 57px;
    top: 56px;
    overflow: visible;
}
.wm text {
    fill: #fff;
    stroke: #3f3f3f;
    stroke-width: 6px;
    stroke-linejoin: round;
    paint-order: stroke;
    font-family: "Noto Sans CJK SC", sans-serif;
    font-style: italic;
    font-weight: 700;
}
.wm .lat {
    font-family: Lato, sans-serif;
    font-weight: 400;
}
.badge {
    position: absolute;
    z-index: 10;
    right: 10px;
    bottom: 0;
    display: flex;
    align-items: center;
    width: 456px;
    height: 228px;
    padding-left: 40px;
    background: #fefefe;
    color: #000;
    text-decoration: none;
}
.badge-text {
    display: flex;
    flex-direction: column;
    margin-top: 8px;
    font-style: italic;
}
.badge-text strong {
    font: italic 900 49px/46px "Noto Sans CJK SC", sans-serif;
}
.badge-text em {
    font: italic 600 32px/36px "Open Sans", sans-serif;
}
```
